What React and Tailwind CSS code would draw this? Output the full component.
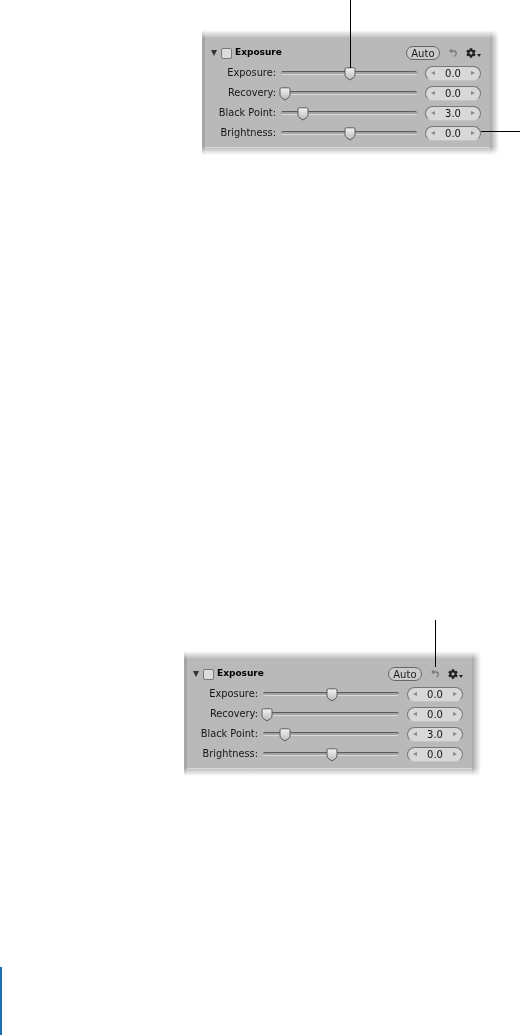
import React from 'react';
import { FaCog } from 'react-icons/fa';

const rows = [
  { label: 'Exposure', value: '0.0', thumb: 69 },
  { label: 'Recovery', value: '0.0', thumb: 4 },
  { label: 'Black Point', value: '3.0', thumb: 22 },
  { label: 'Brightness', value: '0.0', thumb: 69 },
];

const Thumb = ({ left }) => (
  <svg
    width="12"
    height="14"
    viewBox="0 0 12 14"
    className="absolute top-[-5px] ml-[-6px]"
    style={{ left }}
  >
    <defs>
      <linearGradient id="thumbFill" x1="0" y1="0" x2="0" y2="1">
        <stop offset="0" stopColor="#f4f4f4" />
        <stop offset="1" stopColor="#b9b9b9" />
      </linearGradient>
    </defs>
    <path
      d="M1 2 Q1 .8 2.5 .8 H9.5 Q11 .8 11 2 V8 Q11 9.5 9 11 L6 13 L3 11 Q1 9.5 1 8 Z"
      fill="url(#thumbFill)"
      stroke="#5c5c5c"
      strokeWidth="1"
      strokeLinejoin="round"
    />
  </svg>
);

const SliderRow = ({ label, value, thumb }) => (
  <div className="flex h-[20px] items-center">
    <div className="w-[71px] text-right text-[9.8px] text-[#151515] whitespace-nowrap">{label}:</div>
    <div className="relative ml-[5px] h-[4px] w-[136px] rounded-full border-t border-t-[#5a5a5a] border-b border-b-[#dadada] bg-[#a3a3a3]">
      <Thumb left={thumb} />
    </div>
    <div className="ml-[8px] flex h-[15px] w-[56px] items-center justify-between rounded-full border border-[#777] border-b-[#c4c4c4] bg-[#d8d8d8] px-[5px]">
      <span className="h-0 w-0 border-y-[2.5px] border-r-[4px] border-y-transparent border-r-[#8a8a8a]" />
      <span className="text-[10px] text-[#111]">{value}</span>
      <span className="h-0 w-0 border-y-[2.5px] border-l-[4px] border-y-transparent border-l-[#8a8a8a]" />
    </div>
  </div>
);

const Panel = ({ className, children }) => (
  <div className={`relative h-[125px] w-[297px] shrink-0 ${className}`}>
    <div className="flex h-full bg-[#b9b9b9] blur-[0.4px]">
      <div className="w-[3px] bg-[#a6a6a6]" />
      <div className="w-[285px]">
        <div className="mt-[16px] flex h-[14px] items-center">
          <span className="ml-[6px] h-0 w-0 border-x-[3.5px] border-t-[6px] border-x-transparent border-t-[#333]" />
          <span className="ml-[4px] h-[11px] w-[11px] rounded-[2px] border border-[#777] bg-[#dcdcdc]" />
          <span className="ml-[3px] text-[9px] font-bold text-black">Exposure</span>
          <span className="ml-[124px] flex h-[14px] w-[34px] items-center justify-center rounded-full border border-[#666] bg-[#cbcbcb] text-[10px] text-[#1a1a1a]">
            Auto
          </span>
          <svg width="10" height="10" viewBox="0 0 10 10" className="ml-[8px]" fill="none">
            <path d="M2 3 H6 Q8.3 3 8.3 5.3 Q8.3 7.4 6.5 8.4" stroke="#7a7a7a" strokeWidth="1.3" />
            <path d="M4 .6 V5.4 L1 3 Z" fill="#7a7a7a" />
          </svg>
          <FaCog className="ml-[8px] text-[10px] text-[#222]" />
          <span className="ml-[1px] mt-[5px] h-0 w-0 border-x-[2px] border-t-[3px] border-x-transparent border-t-[#222]" />
        </div>
        <div className="mt-[3px]">
          {rows.map((row) => (
            <SliderRow key={row.label} {...row} />
          ))}
        </div>
        <div className="mt-[4px] h-px bg-[#d4d4d4]" />
      </div>
      <div className="w-[9px] bg-gradient-to-r from-[#a6a6a6] to-white" />
    </div>
    <div className="absolute inset-x-0 top-0 h-[8px] bg-gradient-to-b from-white to-transparent" />
    <div className="absolute inset-x-0 bottom-0 h-[8px] bg-gradient-to-t from-white to-transparent" />
    {children}
  </div>
);

export default function App() {
  return (
    <div
      className="relative flex h-[1035px] w-[520px] flex-col overflow-hidden bg-white"
      style={{ fontFamily: '"DejaVu Sans", sans-serif' }}
    >
      <Panel className="ml-[202px] mt-[30px]">
        <div className="absolute left-[148px] top-[-30px] h-[68px] w-px bg-black" />
        <div className="absolute left-[279px] top-[101px] h-px w-[39px] bg-black" />
      </Panel>
      <Panel className="ml-[184px] mt-[496px]">
        <div className="absolute left-[251px] top-[-31px] h-[47px] w-px bg-black" />
      </Panel>
      <div className="mt-auto h-[68px] w-[2px] bg-[#1f6fae]" />
    </div>
  );
}
